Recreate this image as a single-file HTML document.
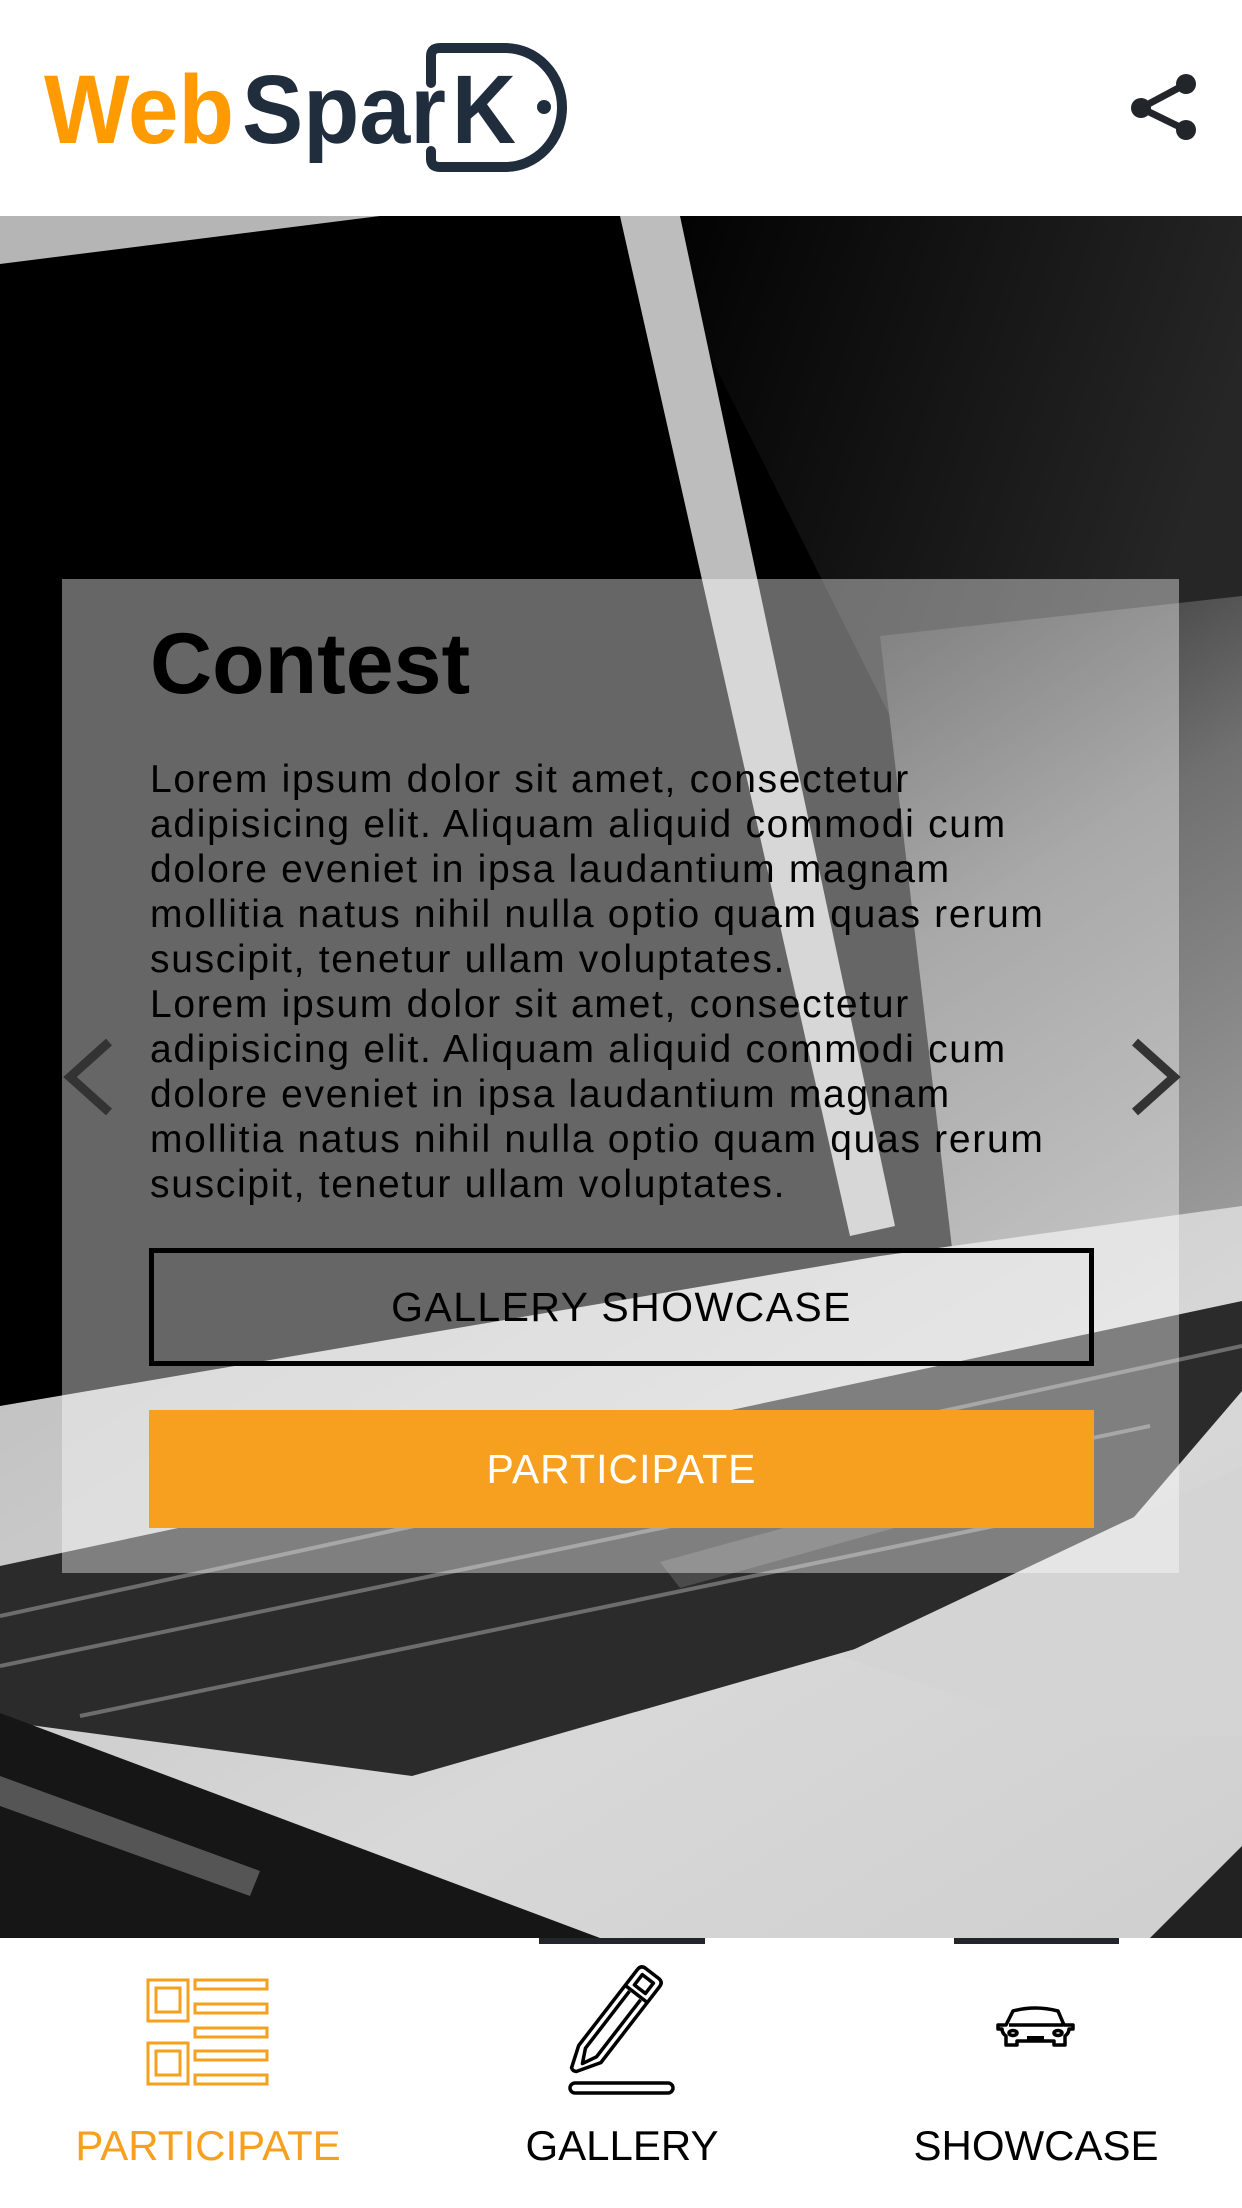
<!DOCTYPE html>
<html><head><meta charset="utf-8"><style>
html,body{margin:0;padding:0;}
body{width:1242px;height:2208px;position:relative;overflow:hidden;background:#fff;font-family:"Liberation Sans",Arial,sans-serif;}
.abs{position:absolute;}
.body-text{left:150px;top:757px;font-size:39px;letter-spacing:1.7px;line-height:45px;color:#000;white-space:nowrap;}
.btn{position:absolute;left:149px;width:945px;display:flex;align-items:center;justify-content:center;font-size:41px;box-sizing:border-box;}
.lbl{position:absolute;top:2122px;font-size:42px;line-height:48px;transform:translateX(-50%);white-space:nowrap;}
</style></head><body>

<!-- header -->
<svg class="abs" style="left:0;top:0" width="1242" height="216" viewBox="0 0 1242 216">
  <text x="44" y="143" font-family="Liberation Sans, sans-serif" font-weight="bold" font-size="97" fill="#ff9a00" textLength="190" lengthAdjust="spacingAndGlyphs">Web</text>
  <text x="242" y="143" font-family="Liberation Sans, sans-serif" font-weight="bold" font-size="97" fill="#1f2d3d" textLength="204" lengthAdjust="spacingAndGlyphs">Spar</text>
  <path d="M431,83 V56 Q431,48 440,48 H505 A57,59.5 0 0 1 505,167 H440 Q431,167 431,159 V151" fill="none" stroke="#1f2d3d" stroke-width="10" stroke-linecap="round"/>
  <text x="452" y="143" font-family="Liberation Sans, sans-serif" font-weight="bold" font-size="97" fill="#1f2d3d" textLength="64" lengthAdjust="spacingAndGlyphs">K</text>
  <circle cx="544" cy="107" r="7" fill="#1f2d3d"/>
  <g stroke="#22262b" stroke-width="7" fill="#22262b">
    <line x1="1186" y1="84" x2="1141" y2="108"/>
    <line x1="1141" y1="108" x2="1186" y2="130"/>
    <circle cx="1186" cy="84" r="10" stroke="none"/>
    <circle cx="1141" cy="108" r="10" stroke="none"/>
    <circle cx="1186" cy="130" r="10" stroke="none"/>
  </g>
</svg>

<!-- photo -->
<svg class="abs" style="left:0;top:216px" width="1242" height="1722" viewBox="0 0 1242 1722">
  <defs>
    <linearGradient id="haze" x1="0" y1="0" x2="1" y2="0.3">
      <stop offset="0" stop-color="#000"/>
      <stop offset="0.55" stop-color="#151515"/>
      <stop offset="1" stop-color="#262626"/>
    </linearGradient>
    <linearGradient id="desk" x1="0" y1="0" x2="0.3" y2="1">
      <stop offset="0" stop-color="#2a2a2a"/>
      <stop offset="0.45" stop-color="#707070"/>
      <stop offset="1" stop-color="#9a9a9a"/>
    </linearGradient>
    <linearGradient id="base" x1="0" y1="0" x2="1" y2="1">
      <stop offset="0" stop-color="#bdbdbd"/>
      <stop offset="0.6" stop-color="#d8d8d8"/>
      <stop offset="1" stop-color="#cfcfcf"/>
    </linearGradient>
  </defs>
  <rect width="1242" height="1722" fill="#000"/>
  <polygon points="640,0 1242,0 1242,500 900,520" fill="url(#haze)"/>
  <polygon points="880,420 1242,380 1242,1150 960,1100" fill="url(#desk)"/>
  <polygon points="0,0 380,0 0,48" fill="#b5b5b5"/>
  <polygon points="620,0 680,0 895,1010 850,1020" fill="#bdbdbd"/>
  <polygon points="0,1190 880,1040 1242,990 1242,1722 0,1722" fill="url(#base)"/>
  <polygon points="0,1350 1242,1085 1242,1175 1075,1370 412,1560 0,1505" fill="#2b2b2b"/>
  <g stroke="#9a9a9a" stroke-width="4" opacity="0.6">
    <line x1="0" y1="1400" x2="1242" y2="1130"/>
    <line x1="0" y1="1450" x2="1150" y2="1210"/>
    <line x1="80" y1="1500" x2="1090" y2="1290"/>
  </g>
  <polygon points="660,1346 1060,1236 1080,1260 680,1372" fill="#4a4a4a"/>
  <polygon points="840,1440 1242,1250 1242,1520 1080,1520" fill="#d4d4d4"/>
  <polygon points="0,1497 600,1722 0,1722" fill="#161616"/>
  <polygon points="0,1560 260,1655 250,1680 0,1590" fill="#555"/>
  <polygon points="1150,1722 1242,1630 1242,1722" fill="#222"/>
</svg>

<!-- panel -->
<div class="abs" style="left:62px;top:579px;width:1117px;height:994px;background:rgba(255,255,255,0.4);"></div>
<div class="abs" style="left:150px;top:621px;font-size:86px;line-height:1;font-weight:bold;color:#000;">Contest</div>
<div class="abs body-text">Lorem ipsum dolor sit amet, consectetur<br>adipisicing elit. Aliquam aliquid commodi cum<br>dolore eveniet in ipsa laudantium magnam<br>mollitia natus nihil nulla optio quam quas rerum<br>suscipit, tenetur ullam voluptates.<br>Lorem ipsum dolor sit amet, consectetur<br>adipisicing elit. Aliquam aliquid commodi cum<br>dolore eveniet in ipsa laudantium magnam<br>mollitia natus nihil nulla optio quam quas rerum<br>suscipit, tenetur ullam voluptates.</div>
<div class="btn" style="top:1248px;height:118px;border:5px solid #000;color:#000;letter-spacing:1.4px;">GALLERY SHOWCASE</div>
<div class="btn" style="top:1410px;height:118px;background:#f7a01f;color:#fff;letter-spacing:1px;">PARTICIPATE</div>

<!-- arrows -->
<svg class="abs" style="left:0;top:1020px" width="1242" height="120" viewBox="0 1020 1242 120">
  <polyline points="109,1042 70,1077 109,1112" fill="none" stroke="#333" stroke-width="9"/>
  <polyline points="1135,1042 1174,1077 1135,1112" fill="none" stroke="#333" stroke-width="9"/>
</svg>

<!-- bottom nav -->
<div class="abs" style="left:539px;top:1938px;width:166px;height:6px;background:#22262b;"></div>
<div class="abs" style="left:954px;top:1938px;width:165px;height:6px;background:#22262b;"></div>

<svg class="abs" style="left:0;top:1950px" width="1242" height="160" viewBox="0 1950 1242 160">
  <g fill="none" stroke="#f7a01f" stroke-width="3">
    <rect x="148" y="1980" width="40" height="41"/>
    <rect x="156" y="1988" width="24" height="24"/>
    <rect x="148" y="2043" width="40" height="41"/>
    <rect x="156" y="2051" width="24" height="24"/>
    <rect x="195" y="1980" width="72" height="9"/>
    <rect x="195" y="2004" width="72" height="9"/>
    <rect x="195" y="2028" width="72" height="9"/>
    <rect x="195" y="2051" width="72" height="9"/>
    <rect x="195" y="2075" width="72" height="9"/>
  </g>
  <g fill="none" stroke="#000" stroke-width="3.5" stroke-linejoin="round">
    <g transform="translate(613,2024) rotate(37.7)">
      <path d="M-14,-58 Q-14,-64 -8,-64 H8 Q14,-64 14,-58 V38 L0,60 Q-3,62 -6,60 L-14,38 Z"/>
      <rect x="-7" y="-57" width="14" height="13"/>
      <path d="M-14,-38 H14"/>
      <path d="M-7,-36 V36 L0,50 L7,36 V-36"/>
    </g>
    <rect x="570" y="2083" width="103" height="10" rx="5"/>
  </g>
  <g fill="none" stroke="#000" stroke-width="3.5" stroke-linejoin="round">
    <path d="M1006,2045 V2036 Q1002,2033 1002,2029 H998 V2025 H1006 L1013,2011 Q1035,2005 1058,2011 L1064,2025 H1073 V2029 H1069 Q1069,2033 1065,2036 V2045 H1054 V2041 H1017 V2045 Z"/>
    <path d="M1009,2025 H1063"/>
    <ellipse cx="1013" cy="2033" rx="4" ry="2.5"/>
    <ellipse cx="1058" cy="2033" rx="4" ry="2.5"/>
  </g>
  <rect x="1027" y="2036" width="17" height="6" fill="#000"/>
</svg>

<div class="lbl" style="left:208px;color:#f7a01f;">PARTICIPATE</div>
<div class="lbl" style="left:622px;color:#000;">GALLERY</div>
<div class="lbl" style="left:1036px;color:#000;">SHOWCASE</div>

</body></html>
